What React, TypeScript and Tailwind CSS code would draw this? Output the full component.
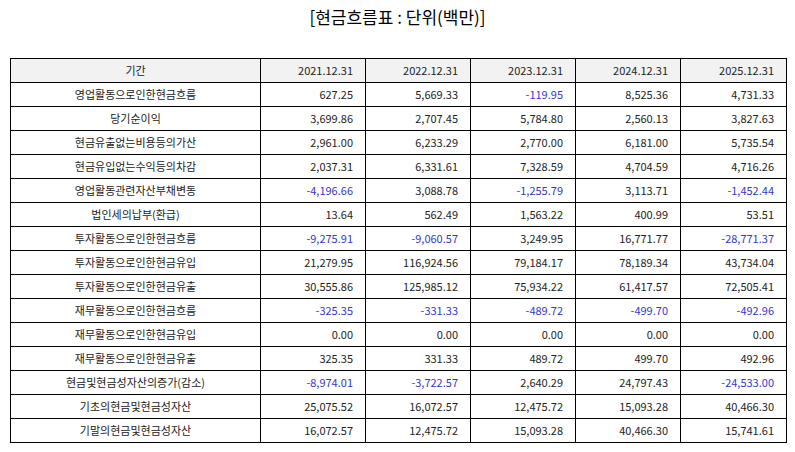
const years = ["2021.12.31", "2022.12.31", "2023.12.31", "2024.12.31", "2025.12.31"];

const rows: [string, string[]][] = [
  ["영업활동으로인한현금흐름", ["627.25", "5,669.33", "-119.95", "8,525.36", "4,731.33"]],
  ["당기순이익", ["3,699.86", "2,707.45", "5,784.80", "2,560.13", "3,827.63"]],
  ["현금유출없는비용등의가산", ["2,961.00", "6,233.29", "2,770.00", "6,181.00", "5,735.54"]],
  ["현금유입없는수익등의차감", ["2,037.31", "6,331.61", "7,328.59", "4,704.59", "4,716.26"]],
  ["영업활동관련자산부채변동", ["-4,196.66", "3,088.78", "-1,255.79", "3,113.71", "-1,452.44"]],
  ["법인세의납부(환급)", ["13.64", "562.49", "1,563.22", "400.99", "53.51"]],
  ["투자활동으로인한현금흐름", ["-9,275.91", "-9,060.57", "3,249.95", "16,771.77", "-28,771.37"]],
  ["투자활동으로인한현금유입", ["21,279.95", "116,924.56", "79,184.17", "78,189.34", "43,734.04"]],
  ["투자활동으로인한현금유출", ["30,555.86", "125,985.12", "75,934.22", "61,417.57", "72,505.41"]],
  ["재무활동으로인한현금흐름", ["-325.35", "-331.33", "-489.72", "-499.70", "-492.96"]],
  ["재무활동으로인한현금유입", ["0.00", "0.00", "0.00", "0.00", "0.00"]],
  ["재무활동으로인한현금유출", ["325.35", "331.33", "489.72", "499.70", "492.96"]],
  ["현금및현금성자산의증가(감소)", ["-8,974.01", "-3,722.57", "2,640.29", "24,797.43", "-24,533.00"]],
  ["기초의현금및현금성자산", ["25,075.52", "16,072.57", "12,475.72", "15,093.28", "40,466.30"]],
  ["기말의현금및현금성자산", ["16,072.57", "12,475.72", "15,093.28", "40,466.30", "15,741.61"]],
];

const font = { fontFamily: '"Noto Sans CJK KR", "Noto Sans", sans-serif' };

export default function App() {
  return (
    <div className="w-[795px] h-[452px] bg-white text-[#222]" style={font}>
      <h1 className="h-[35px] pt-[5px] text-center text-[17px] leading-[24px] text-black">
        [현금흐름표 : 단위(백만)]
      </h1>
      <div className="px-[10px] pt-[23px]">
        <table className="w-[776px] border-collapse table-fixed text-[11px]">
          <colgroup>
            <col className="w-[250px]" />
            <col className="w-[105px]" />
            <col className="w-[105px]" />
            <col className="w-[105px]" />
            <col className="w-[105px]" />
            <col className="w-[106px]" />
          </colgroup>
          <thead>
            <tr className="bg-[#f2f2f2] h-[24px]">
              <th className="border-[1.5px] border-black font-normal text-center">기간</th>
              {years.map((y) => (
                <th key={y} className="border-[1.5px] border-black font-normal text-right pr-[12px]">
                  {y}
                </th>
              ))}
            </tr>
          </thead>
          <tbody>
            {rows.map(([label, vals]) => (
              <tr key={label} className="h-[24px]">
                <td className="border-[1.5px] border-black text-center">{label}</td>
                {vals.map((v, i) => (
                  <td
                    key={i}
                    className={
                      v.startsWith("-")
                        ? "border-[1.5px] border-black text-right pr-[12px] text-[#3535d0]"
                        : "border-[1.5px] border-black text-right pr-[12px]"
                    }
                  >
                    {v}
                  </td>
                ))}
              </tr>
            ))}
          </tbody>
        </table>
      </div>
    </div>
  );
}
